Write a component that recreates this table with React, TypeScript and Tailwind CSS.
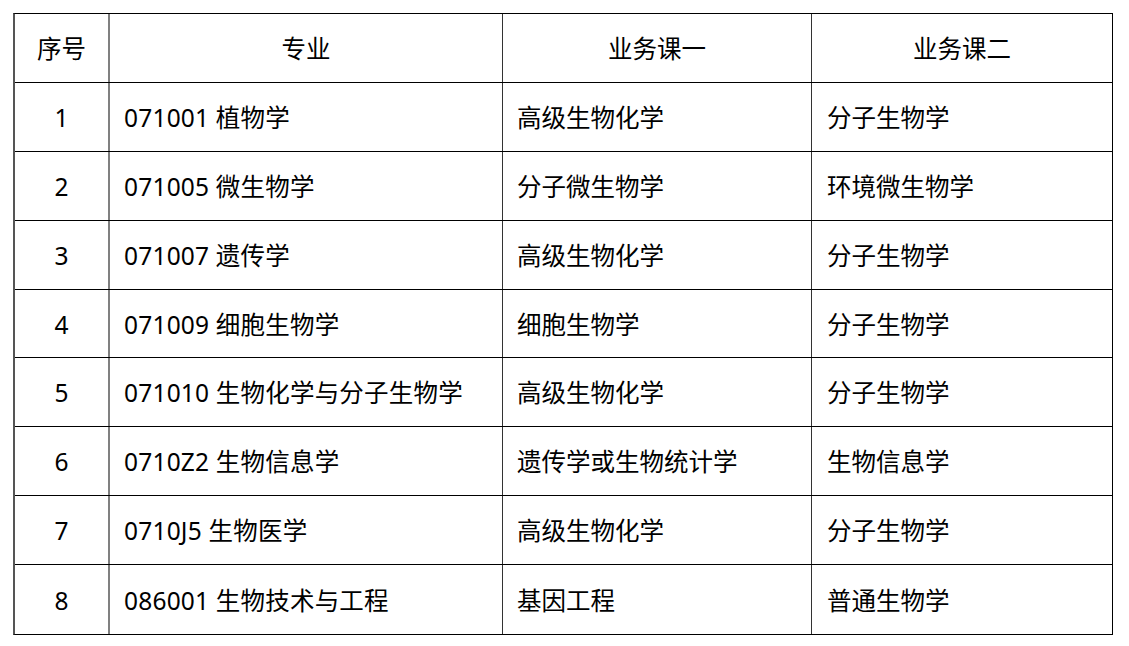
import React from "react";

const rows: [string, string, string, string][] = [
  ["1", "071001 植物学", "高级生物化学", "分子生物学"],
  ["2", "071005 微生物学", "分子微生物学", "环境微生物学"],
  ["3", "071007 遗传学", "高级生物化学", "分子生物学"],
  ["4", "071009 细胞生物学", "细胞生物学", "分子生物学"],
  ["5", "071010 生物化学与分子生物学", "高级生物化学", "分子生物学"],
  ["6", "0710Z2 生物信息学", "遗传学或生物统计学", "生物信息学"],
  ["7", "0710J5 生物医学", "高级生物化学", "分子生物学"],
  ["8", "086001 生物技术与工程", "基因工程", "普通生物学"],
];

const heights = [69, 69, 69, 68, 69, 69, 69, 69];

export default function App() {
  return (
    <div
      className="w-[1129px] h-[646px] bg-white text-[24.5px] text-black"
      style={{ fontFamily: '"Noto Sans", "Noto Sans CJK SC", sans-serif' }}
    >
      <div className="pt-[13px] pl-[13px]">
        <div className="w-[1100px] border-t border-black border-b border-l-2 border-l-[#555] border-r border-r-black">
          <div className="flex h-[69px] border-b border-black">
            <div className="w-[95px] flex items-center justify-center pt-[2px] border-r-2 border-r-[#808080]">序号</div>
            <div className="w-[393px] flex items-center justify-center pt-[2px] border-r border-r-[#333]">专业</div>
            <div className="w-[309px] flex items-center justify-center pt-[2px] border-r border-r-[#333]">业务课一</div>
            <div className="flex-1 flex items-center justify-center pt-[2px]">业务课二</div>
          </div>
          {rows.map((r, i) => (
            <div
              key={i}
              className={`flex ${i < rows.length - 1 ? "border-b border-black" : ""}`}
              style={{ height: heights[i] }}
            >
              <div className="w-[95px] flex items-center justify-center pt-[3px] border-r-2 border-r-[#808080]">{r[0]}</div>
              <div className="w-[393px] flex items-center pl-[14px] pt-[3px] tracking-[0.2px] border-r border-r-[#333]">{r[1]}</div>
              <div className="w-[309px] flex items-center pl-[14px] pt-[3px] border-r border-r-[#333]">{r[2]}</div>
              <div className="flex-1 flex items-center pl-[15px] pt-[3px]">{r[3]}</div>
            </div>
          ))}
        </div>
      </div>
    </div>
  );
}
